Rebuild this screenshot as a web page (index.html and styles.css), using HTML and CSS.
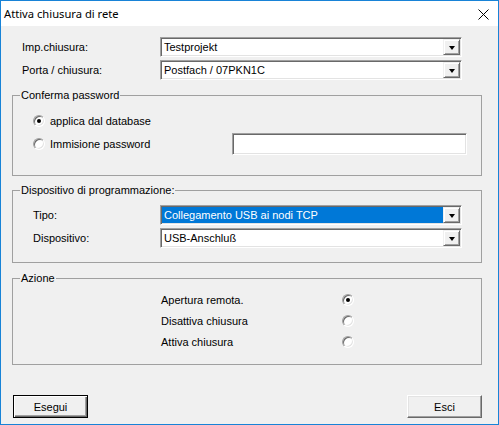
FILE: index.html
```html
<!DOCTYPE html>
<html>
<head>
<meta charset="utf-8">
<link rel="stylesheet" href="styles.css">
</head>
<body>
<div class="window">
  <div class="titlebar">
    <span class="title">Attiva chiusura di rete</span>
    <svg class="close" width="11" height="11" viewBox="0 0 11 11"><path d="M0.5 0.5 L10.5 10.5 M10.5 0.5 L0.5 10.5" stroke="#000" stroke-width="1" fill="none"/></svg>
  </div>
  <div class="content">
    <div class="fields top">
      <span class="label">Imp.chiusura:</span>
      <div class="combo"><span class="value">Testprojekt</span><span class="drop"><i></i></span></div>
      <span class="label">Porta / chiusura:</span>
      <div class="combo"><span class="value">Postfach / 07PKN1C</span><span class="drop"><i></i></span></div>
    </div>

    <fieldset class="group g1">
      <legend>Conferma password</legend>
      <div class="gbody">
        <div class="pwrow">
          <span class="radio checked"></span><span class="rtext">applica dal database</span>
        </div>
        <div class="pwrow">
          <span class="radio"></span><span class="rtext">Immisione password</span>
          <span class="textbox"></span>
        </div>
      </div>
    </fieldset>

    <fieldset class="group g2">
      <legend>Dispositivo di programmazione:</legend>
      <div class="gbody">
        <div class="fields inner">
          <span class="label">Tipo:</span>
          <div class="combo"><span class="value selected">Collegamento USB ai nodi TCP</span><span class="drop"><i></i></span></div>
          <span class="label">Dispositivo:</span>
          <div class="combo"><span class="value">USB-Anschluß</span><span class="drop"><i></i></span></div>
        </div>
      </div>
    </fieldset>

    <fieldset class="group g3">
      <legend>Azione</legend>
      <div class="gbody">
        <div class="arow"><span class="atext">Apertura remota.</span><span class="radio checked"></span></div>
        <div class="arow"><span class="atext">Disattiva chiusura</span><span class="radio"></span></div>
        <div class="arow"><span class="atext">Attiva chiusura</span><span class="radio"></span></div>
      </div>
    </fieldset>

    <div class="buttons">
      <button class="btn default">Esegui</button>
      <button class="btn">Esci</button>
    </div>
  </div>
</div>
</body>
</html>
```

FILE: styles.css
```css
* { box-sizing: border-box; }
html, body { margin: 0; padding: 0; background: #ffffff; }
body {
  font-family: "Liberation Sans", Arial, sans-serif;
  font-size: 11px;
  color: #000;
}
.window {
  width: 499px;
  height: 425px;
  border: 1px solid #1883d7;
  background: #f0f0f0;
  display: flex;
  flex-direction: column;
}
.titlebar {
  height: 25px;
  background: #fff;
  display: flex;
  align-items: center;
  justify-content: space-between;
  padding: 0 9px 0 3px;
}
.title {
  font-family: "Noto Sans", "Open Sans", sans-serif;
  font-size: 11.2px;
  line-height: 16px;
}
.close { display: block; margin-top: 1px; }
.content {
  flex: 1;
  padding: 11px 16px 0 11px;
  display: flex;
  flex-direction: column;
}
.fields {
  display: grid;
  grid-template-columns: 138px 302px;
  grid-auto-rows: 20px;
  row-gap: 3px;
  align-items: center;
}
.fields.top { padding-left: 10px; }
.label { line-height: 13px; }
.combo {
  height: 20px;
  display: flex;
  background: #fff;
  border: 1px solid;
  border-color: #a0a0a0 #ffffff #ffffff #a0a0a0;
  box-shadow: inset 1px 1px 0 #696969, inset -1px -1px 0 #e3e3e3;
  padding: 1px;
}
.value {
  flex: 1;
  padding-left: 2px;
  line-height: 16px;
  white-space: nowrap;
  overflow: hidden;
}
.value.selected { background: #0078d7; color: #fff; }
.drop {
  width: 17px;
  background: #f0f0f0;
  border: 1px solid;
  border-color: #f0f0f0 #696969 #696969 #f0f0f0;
  box-shadow: inset 1px 1px 0 #fff, inset -1px -1px 0 #a0a0a0;
  display: flex;
  align-items: center;
  justify-content: center;
}
.drop i {
  display: block;
  width: 0; height: 0;
  border-left: 3.5px solid transparent;
  border-right: 3.5px solid transparent;
  border-top: 4px solid #000;
  margin-top: 1px;
}
.group {
  margin: 0;
  border: 1px solid #a0a0a0;
  padding: 0;
  min-width: 0;
  width: 470px;
}
.group legend {
  padding: 0 1px;
  margin-left: 7px;
  line-height: 14px;
}
.g1 { margin-top: 8px; height: 88px; }
.g1 .gbody { padding: 9px 0 0 20px; }
.pwrow {
  display: flex;
  align-items: center;
  height: 20px;
}
.pwrow + .pwrow { margin-top: 3px; }
.radio {
  width: 12px;
  height: 12px;
  border-radius: 50%;
  border: 1px solid;
  border-color: #a0a0a0 #ffffff #ffffff #a0a0a0;
  box-shadow: inset 1px 1px 0 #696969, inset -1px -1px 0 #e3e3e3;
  background: #fff;
  display: flex;
  align-items: center;
  justify-content: center;
  flex: none;
}
.radio.checked::after {
  content: "";
  width: 4px;
  height: 4px;
  border-radius: 50%;
  background: #000;
}
.rtext { margin-left: 5px; width: 182px; }
.textbox {
  width: 235px;
  height: 22px;
  background: #fff;
  border: 1px solid;
  border-color: #a0a0a0 #ffffff #ffffff #a0a0a0;
  box-shadow: inset 1px 1px 0 #696969, inset -1px -1px 0 #e3e3e3;
}
.g2 { margin-top: 7px; height: 80px; }
.g2 .gbody { padding: 8px 0 0 20px; }
.fields.inner { grid-template-columns: 127px 302px; }
.g3 { margin-top: 8px; height: 94px; }
.g3 .gbody { padding: 4px 0 0 148px; }
.arow {
  display: flex;
  align-items: center;
  height: 21px;
}
.atext { width: 181px; }
.buttons {
  margin-top: 30px;
  width: 470px;
  display: flex;
  justify-content: space-between;
  padding-left: 1px;
}
.btn {
  font-family: "Liberation Sans", Arial, sans-serif;
  font-size: 11px;
  width: 75px;
  height: 23px;
  background: #f0f0f0;
  border: 1px solid;
  border-color: #fff #696969 #696969 #fff;
  box-shadow: inset -1px -1px 0 #a0a0a0, inset 1px 1px 0 #e3e3e3;
  color: #000;
  padding: 0;
}
.btn.default {
  border: 1px solid #000;
  box-shadow: inset 1px 1px 0 #fff, inset -1px -1px 0 #696969, inset -2px -2px 0 #a0a0a0;
}
```
